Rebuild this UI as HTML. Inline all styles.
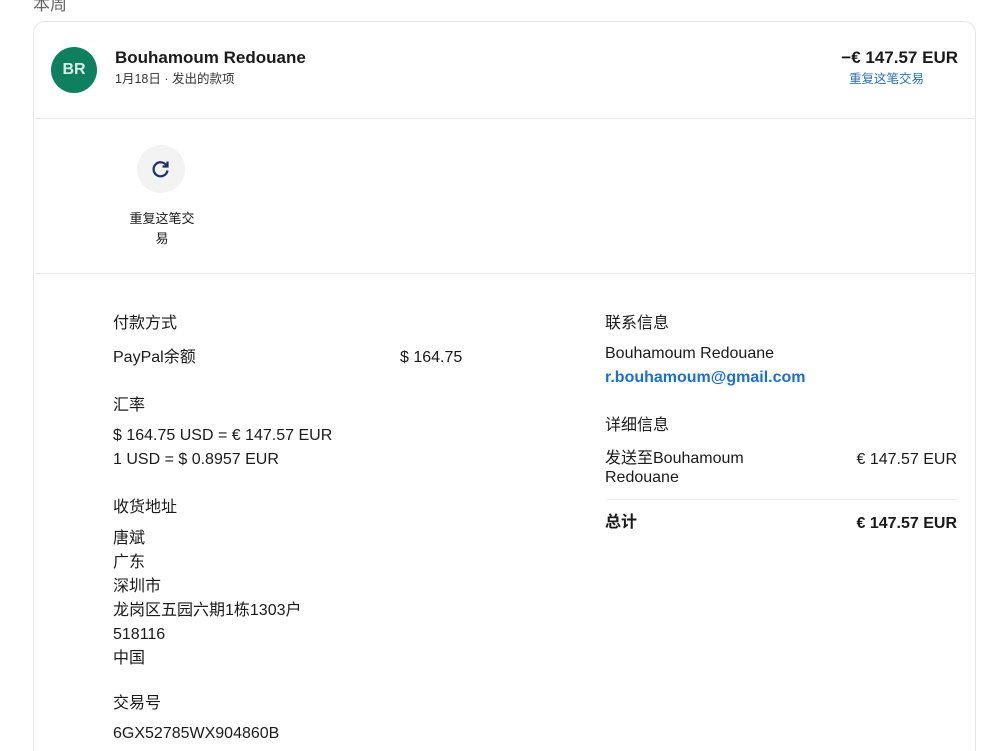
<!DOCTYPE html>
<html><head><meta charset="utf-8"><style>
*{margin:0;padding:0;box-sizing:border-box}
html,body{width:1000px;height:751px;overflow:hidden}
body{background:#fff;font-family:"Liberation Sans","Noto Sans CJK SC",sans-serif;color:#1a1a1a;position:relative}
.a{position:absolute;white-space:nowrap}
.card{position:absolute;left:33px;top:21px;width:943px;height:760px;border:1px solid #e6e6e6;border-radius:12px}
.hr{position:absolute;height:1px;background:#e8e8e8}
.l{font-size:16px;line-height:20px}
</style></head><body>
<div class="a" style="left:33px;top:-10px;font-size:17px;color:#666">本周</div>
<div class="card"></div>
<div class="hr" style="left:34px;top:118px;width:941px"></div>
<div class="hr" style="left:34px;top:273px;width:941px"></div>
<div class="a" style="left:51px;top:47px;width:46px;height:46px;border-radius:50%;background:#0e7f5f;color:#d8efe6;font-weight:bold;font-size:16px;line-height:46px;text-align:center">BR</div>
<div class="a" style="left:115px;top:48px;font-size:17px;line-height:20px;font-weight:bold">Bouhamoum Redouane</div>
<div class="a" style="left:115px;top:71px;font-size:12.5px;line-height:17px;color:#333">1月18日 · 发出的款项</div>
<div class="a" style="right:42px;top:48px;font-size:17px;line-height:20px;font-weight:bold">−€ 147.57 EUR</div>
<div class="a" style="right:76px;top:71px;font-size:12.5px;line-height:17px;color:#2a6fb0">重复这笔交易</div>
<div class="a" style="left:137px;top:145px;width:48px;height:48px;border-radius:50%;background:#f3f3f3"></div>
<svg class="a" style="left:150px;top:158px" width="22" height="22" viewBox="0 0 22 22"><path d="M16.5 7.5A7 7 0 1 0 17.5 12.5" fill="none" stroke="#1f2f6e" stroke-width="2.2"/><path d="M17.5 3.5V8.5H12.5" fill="none" stroke="#1f2f6e" stroke-width="2.2"/></svg>
<div class="a" style="left:124px;top:209px;font-size:13px;line-height:20px;width:76px;white-space:normal;text-align:center">重复这笔交易</div>
<div class="a l" style="left:113px;top:314px">付款方式</div>
<div class="a l" style="left:113px;top:348px">PayPal余额</div>
<div class="a l" style="left:400px;top:348px">$ 164.75</div>
<div class="a l" style="left:113px;top:396px">汇率</div>
<div class="a l" style="left:113px;top:426px">$ 164.75 USD = € 147.57 EUR</div>
<div class="a l" style="left:113px;top:450px">1 USD = $ 0.8957 EUR</div>
<div class="a l" style="left:113px;top:498px">收货地址</div>
<div class="a" style="left:113px;top:527px;font-size:16px;line-height:24px">唐斌<br>广东<br>深圳市<br>龙岗区五园六期1栋1303户<br>518116<br>中国</div>
<div class="a l" style="left:113px;top:694px">交易号</div>
<div class="a l" style="left:113px;top:724px">6GX52785WX904860B</div>
<div class="a l" style="left:605px;top:314px">联系信息</div>
<div class="a l" style="left:605px;top:344px">Bouhamoum Redouane</div>
<div class="a l" style="left:605px;top:368px;color:#1a6fd0;font-weight:bold">r.bouhamoum@gmail.com</div>
<div class="a l" style="left:605px;top:416px">详细信息</div>
<div class="a" style="left:605px;top:449px;font-size:16px;line-height:19px">发送至Bouhamoum<br>Redouane</div>
<div class="a l" style="right:43px;top:450px">€ 147.57 EUR</div>
<div class="hr" style="left:607px;top:499px;width:350px"></div>
<div class="a l" style="left:605px;top:513px;font-weight:bold">总计</div>
<div class="a l" style="right:43px;top:514px;font-weight:bold">€ 147.57 EUR</div>
</body></html>
